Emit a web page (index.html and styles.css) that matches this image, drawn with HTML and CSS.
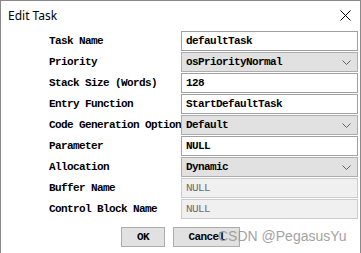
FILE: index.html
```html
<!DOCTYPE html>
<html lang="en">
<head>
    <meta charset="UTF-8">
    <title>Edit Task</title>
    <link rel="stylesheet" href="styles.css">
</head>
<body>
    <div class="dialog">
        <div class="titlebar">
            <span class="title">Edit Task</span>
            <svg class="close" width="11" height="11" viewBox="0 0 11 11">
                <path d="M0.5 0.5 L10.5 10.5 M10.5 0.5 L0.5 10.5" stroke="#000" stroke-width="1" fill="none"/>
            </svg>
        </div>
        <div class="form">
            <label>Task Name</label>
            <div class="field">defaultTask</div>

            <label>Priority</label>
            <div class="field select">
                <span>osPriorityNormal</span>
                <svg width="9" height="5" viewBox="0 0 9 5"><path d="M0.5 0.5 L4.5 4.5 L8.5 0.5" stroke="#606060" fill="none"/></svg>
            </div>

            <label>Stack Size (Words)</label>
            <div class="field">128</div>

            <label>Entry Function</label>
            <div class="field">StartDefaultTask</div>

            <label>Code Generation Option</label>
            <div class="field select">
                <span>Default</span>
                <svg width="9" height="5" viewBox="0 0 9 5"><path d="M0.5 0.5 L4.5 4.5 L8.5 0.5" stroke="#606060" fill="none"/></svg>
            </div>

            <label>Parameter</label>
            <div class="field">NULL</div>

            <label>Allocation</label>
            <div class="field select">
                <span>Dynamic</span>
                <svg width="9" height="5" viewBox="0 0 9 5"><path d="M0.5 0.5 L4.5 4.5 L8.5 0.5" stroke="#606060" fill="none"/></svg>
            </div>

            <label>Buffer Name</label>
            <div class="field disabled">NULL</div>

            <label>Control Block Name</label>
            <div class="field disabled">NULL</div>
        </div>
        <div class="buttons">
            <button class="ok">OK</button>
            <button class="cancel">Cancel</button>
        </div>
        <div class="watermark">CSDN @PegasusYu</div>
    </div>
</body>
</html>
```

FILE: styles.css
```css
body {
    margin: 0;
    background: #fff;
}
.dialog {
    position: relative;
    width: 359px;
    height: 252px;
    border: 1px solid #8a8a8a;
    border-bottom: none;
    background: #fff;
    font-family: 'Liberation Mono', monospace;
    font-size: 11px;
    letter-spacing: -0.6px;
    color: #000;
}
.titlebar {
    height: 30px;
    display: flex;
    align-items: center;
    justify-content: space-between;
    padding: 0 9px 0 7px;
}
.title {
    font-family: 'Noto Sans', sans-serif;
    font-size: 12px;
    letter-spacing: 0;
    margin-top: -1px;
}
.close {
    margin-top: -1px;
}
.form {
    display: grid;
    grid-template-columns: 132px 177px;
    grid-auto-rows: 20px;
    row-gap: 1px;
    padding-left: 48px;
}
.form label {
    display: flex;
    align-items: center;
    white-space: nowrap;
    font-weight: bold;
}
.field {
    box-sizing: border-box;
    border: 1px solid #a0a0a0;
    padding: 0 4px;
    display: flex;
    align-items: center;
    justify-content: space-between;
    background: #fff;
    font-weight: bold;
}
.select {
    background: #e1e1e1;
    border-color: #adadad;
    padding-right: 6px;
}
.disabled {
    background: #f0f0f0;
    border-color: #cccccc;
    color: #6d6d6d;
    font-weight: normal;
}
.buttons {
    display: flex;
    gap: 8px;
    padding: 8px 0 0 120px;
}
.buttons button {
    height: 20px;
    box-sizing: border-box;
    border: 1px solid #adadad;
    background: #e1e1e1;
    font-family: 'Liberation Mono', monospace;
    font-size: 11px;
    font-weight: bold;
    letter-spacing: -0.6px;
    padding: 0;
}
.ok {
    width: 44px;
}
.cancel {
    width: 67px;
}
.watermark {
    position: absolute;
    left: 217px;
    top: 227px;
    font-family: 'Liberation Sans', sans-serif;
    font-size: 14px;
    letter-spacing: 0;
    color: #9a9a9a;
    opacity: 0.9;
}
```
